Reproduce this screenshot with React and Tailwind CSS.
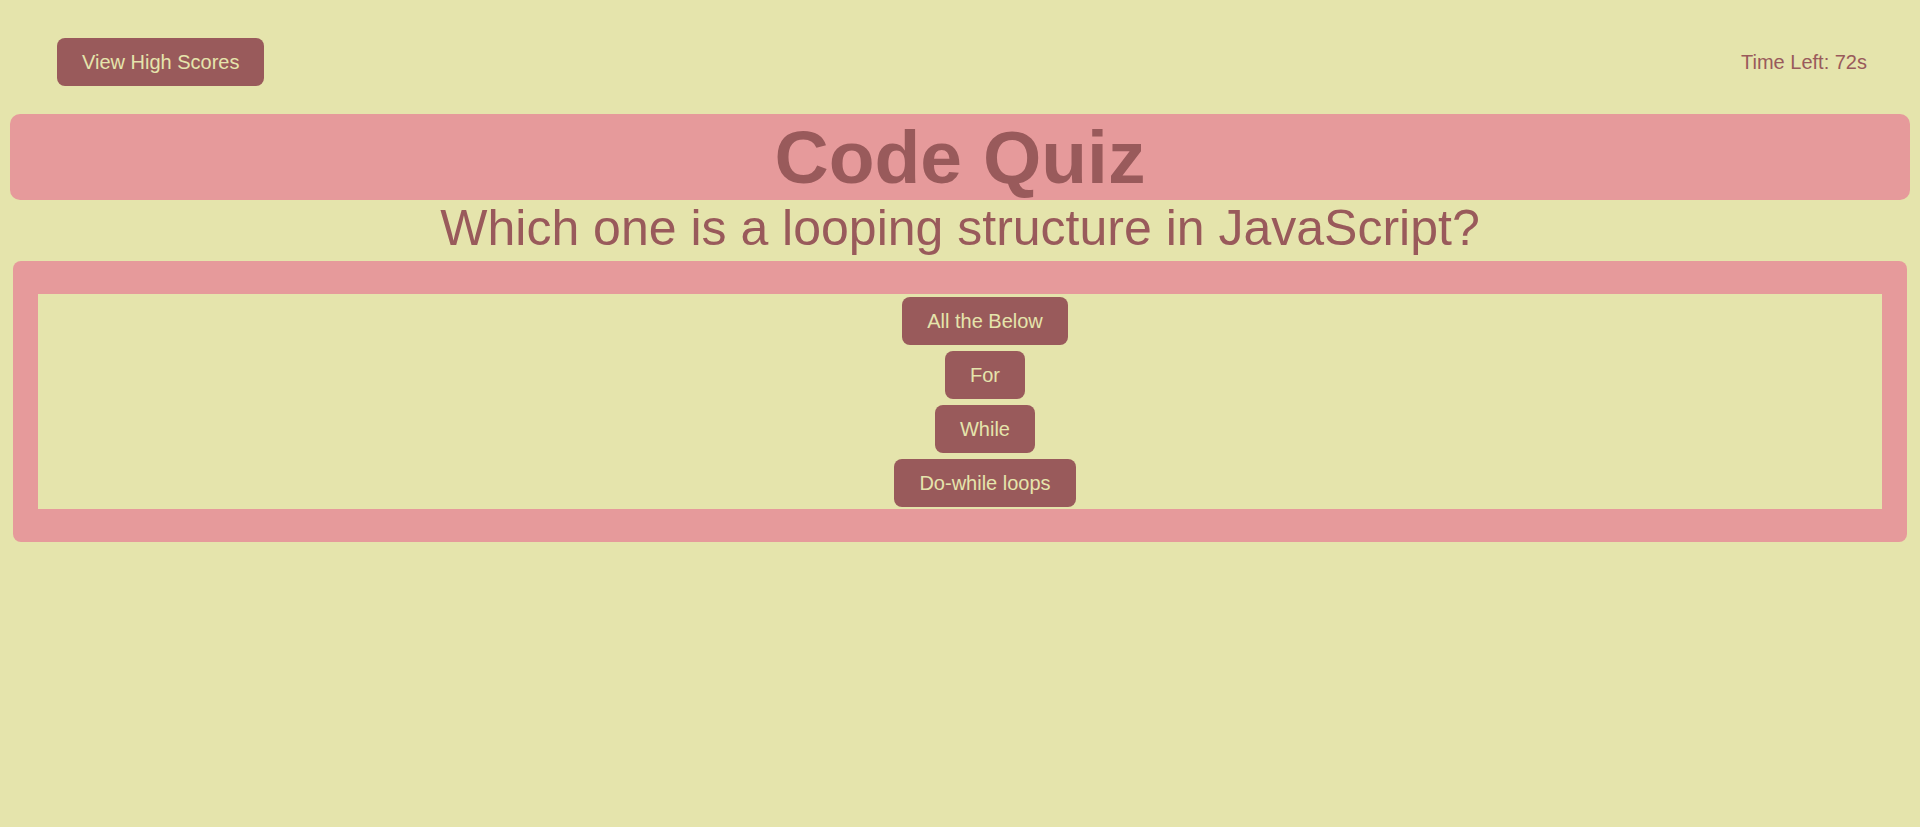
import React, { useState } from "react";

const choices = ["All the Below", "For", "While", "Do-while loops"];

const App = () => {
  const [timeLeft] = useState(72);

  return (
    <div
      className="min-h-screen bg-[#e5e4ac] text-[#995a5b]"
      style={{ fontFamily: '"Liberation Sans", Arial, sans-serif' }}
    >
      {/* Top bar */}
      <div className="flex items-center justify-between pt-[38px] pl-[57px] pr-[53px] mb-[28px]">
        <button className="h-[48px] px-[25px] rounded-[8px] bg-[#995a5b] text-[#e5e4ac] text-[20px] leading-[23px]">
          View High Scores
        </button>
        <span className="text-[20px] leading-[23px]">Time Left: {timeLeft}s</span>
      </div>

      {/* Title */}
      <header className="mx-[10px] rounded-[10px] bg-[#e69a9b]">
        <h1 className="h-[86px] text-center text-[75px] font-bold leading-[86px]">Code Quiz</h1>
      </header>

      {/* Question */}
      <h2 className="h-[61px] text-center text-[50px] leading-[1.15]">
        Which one is a looping structure in JavaScript?
      </h2>

      {/* Choices */}
      <div className="mx-[13px] rounded-[8px] bg-[#e69a9b] px-[25px] py-[33px]">
        <div className="flex flex-col items-center gap-[6px] bg-[#e5e4ac] pt-[3px] pb-[2px] pl-[50px]">
          {choices.map((choice) => (
            <button
              key={choice}
              className="h-[48px] px-[25px] rounded-[8px] bg-[#995a5b] text-[#e5e4ac] text-[20px] leading-[23px]"
            >
              {choice}
            </button>
          ))}
        </div>
      </div>
    </div>
  );
};

export default App;
